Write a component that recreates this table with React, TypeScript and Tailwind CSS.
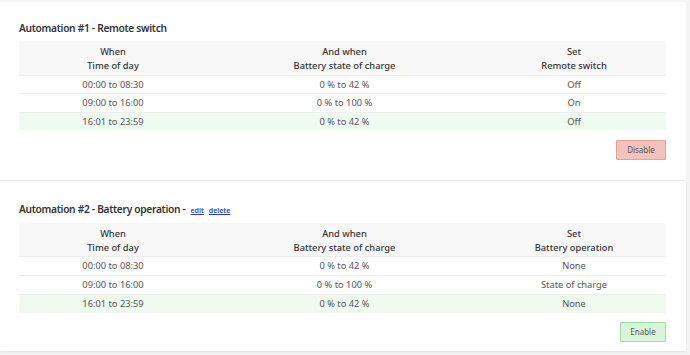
import React from "react";

type Row = { time: string; soc: string; set: string; active?: boolean };

const font = { fontFamily: '"Noto Sans", "DejaVu Sans", sans-serif' };

function Table({
  setLabel,
  rows,
  headH,
  rowH,
}: {
  setLabel: string;
  rows: Row[];
  headH: string;
  rowH: string[];
}) {
  return (
    <div className="w-[647px] text-[9.3px] text-[#555]">
      {/* header */}
      <div
        className={
          "grid grid-cols-[188px_275px_184px] bg-[#f8f8f8] items-center pt-[2px] text-[#333] font-medium leading-[14px] " +
          headH
        }
      >
        <div className="text-center">
          <div>When</div>
          <div>Time of day</div>
        </div>
        <div className="text-center">
          <div>And when</div>
          <div>Battery state of charge</div>
        </div>
        <div className="text-center">
          <div>Set</div>
          <div>{setLabel}</div>
        </div>
      </div>
      {rows.map((r, i) => (
        <div
          key={i}
          className={
            "grid grid-cols-[188px_275px_184px] items-center border-t border-[#eeeeee] " +
            rowH[i] +
            (r.active ? " bg-[#effaf1]" : " bg-white")
          }
        >
          <div className="text-center">{r.time}</div>
          <div className="text-center">{r.soc}</div>
          <div className="text-center">{r.set}</div>
        </div>
      ))}
    </div>
  );
}

export default function App() {
  return (
    <div className="w-[690px] h-[355px] bg-[#f4f4f4] overflow-hidden pt-[2px] pr-[4px]" style={font}>
      {/* AUTOMATION 1 */}
      <section className="bg-white px-[19px] pt-[19px] h-[179px] border-b border-[#ececec]">
        <h2 className="text-[10.2px] leading-[14px] font-semibold tracking-[-0.3px] text-[#333] mb-[6px]">
          Automation #1 - Remote switch
        </h2>
        <Table
          setLabel="Remote switch"
          headH="h-[34px]"
          rowH={["h-[18px]", "h-[19px]", "h-[18px]"]}
          rows={[
            { time: "00:00 to 08:30", soc: "0 % to 42 %", set: "Off" },
            { time: "09:00 to 16:00", soc: "0 % to 100 %", set: "On" },
            { time: "16:01 to 23:59", soc: "0 % to 42 %", set: "Off", active: true },
          ]}
        />
        <div className="w-[647px] flex justify-end mt-[10px]">
          <button className="w-[50px] h-[20px] bg-[#f4c2bd] border border-[#ee9d94] text-[8px] text-[#555] rounded-[1px]">
            Disable
          </button>
        </div>
      </section>

      {/* AUTOMATION 2 */}
      <section className="bg-white px-[19px] pt-[21px] h-[170px] shadow-[0_1px_2px_rgba(0,0,0,0.08)]">
        <h2 className="text-[10.2px] leading-[14px] font-semibold tracking-[-0.3px] text-[#333] mb-[5px] flex items-baseline">
          <span>Automation #2 - Battery operation -</span>
          <a href="#" className="ml-[5px] text-[7px] font-semibold tracking-normal text-[#2a3fd0] underline">edit</a>
          <a href="#" className="ml-[5px] text-[7px] font-semibold tracking-normal text-[#2a3fd0] underline">delete</a>
        </h2>
        <Table
          setLabel="Battery operation"
          headH="h-[33px]"
          rowH={["h-[19px]", "h-[19px]", "h-[19px]"]}
          rows={[
            { time: "00:00 to 08:30", soc: "0 % to 42 %", set: "None" },
            { time: "09:00 to 16:00", soc: "0 % to 100 %", set: "State of charge" },
            { time: "16:01 to 23:59", soc: "0 % to 42 %", set: "None", active: true },
          ]}
        />
        <div className="w-[647px] flex justify-end mt-[9px]">
          <button className="w-[46px] h-[20px] bg-[#d9f5d9] border border-[#a2dea2] text-[8px] text-[#555] rounded-[1px]">
            Enable
          </button>
        </div>
      </section>
    </div>
  );
}
